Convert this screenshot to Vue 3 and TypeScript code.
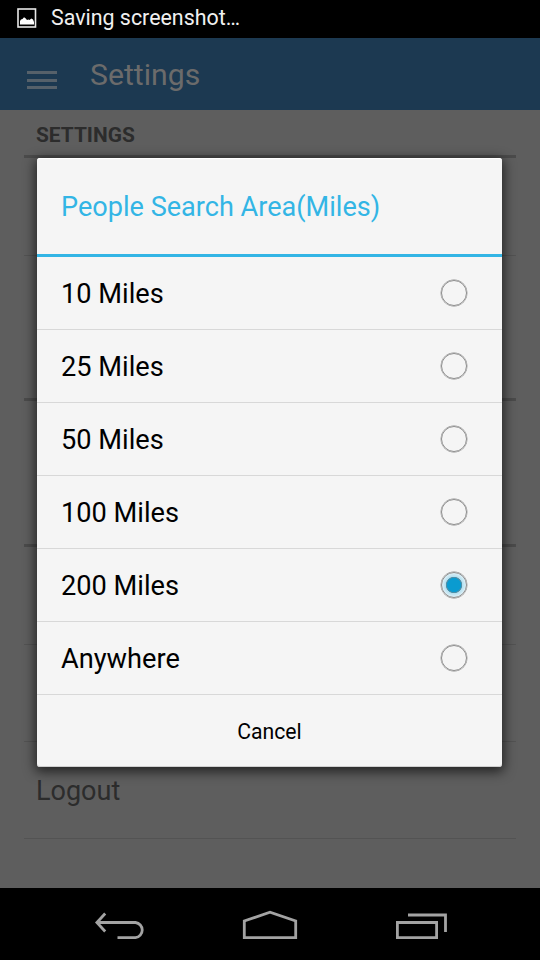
<script setup lang="ts">
import { ref } from 'vue'

const options: string[] = ['10 Miles', '25 Miles', '50 Miles', '100 Miles', '200 Miles', 'Anywhere']
const selected = ref('200 Miles')
</script>

<template>
  <div class="screen">
    <div class="status">
      <svg class="photo" width="20" height="20" viewBox="0 0 20 20">
        <rect x="1" y="1" width="17.5" height="18" fill="none" stroke="#e8e8e8" stroke-width="1.6" />
        <path d="M3 16.500V13l1-1.500 1.500-.5L7 9.300l1.500 1L10 12l1.500-.6 1 .6 1.800-1.400 1.700 1L17 14v2.500z" fill="#fff" />
      </svg>
      <span>Saving screenshot…</span>
    </div>

    <header class="bar">
      <div class="menu"><i></i><i></i><i></i></div>
      <h1>Settings</h1>
    </header>

    <main class="page">
      <h2 class="section first">SETTINGS</h2>
      <div class="item tall"></div>
      <div class="item last"></div>
      <div class="section"></div>
      <div class="item last tall"></div>
      <div class="section"></div>
      <div class="item"></div>
      <div class="item"></div>
      <div class="item"><span>Logout</span></div>
    </main>

    <nav class="nav">
      <svg width="540" height="72" viewBox="0 0 540 72" fill="none" stroke="#a3a3a3" stroke-width="2.8">
        <path d="M97 34.500h38.500a7.600 7.600 0 0 1 0 15.100H117.500M105.200 25.500l-8.300 9 8.300 9" />
        <path d="M244.300 49.600V33L270 24.200 295.700 33v16.600z" />
        <path d="M397.400 34.500h39.200v15.100h-39.200zM408 27h37.500v17" />
      </svg>
    </nav>

    <div class="overlay">
      <section class="dialog">
        <h3>People Search Area(Miles)</h3>
        <label v-for="option in options" :key="option" class="option" @click="selected = option">
          <span>{{ option }}</span>
          <i class="radio" :class="{ on: option === selected }"></i>
        </label>
        <button>Cancel</button>
      </section>
    </div>
  </div>
</template>

<style>
body {
  margin: 0;
  background: #000;
}
</style>

<style scoped>
.screen {
  position: relative;
  width: 540px;
  height: 960px;
  overflow: hidden;
  display: flex;
  flex-direction: column;
  background: #5e5e5e;
  font-family: Roboto, "Liberation Sans", sans-serif;
}
h1, h2, h3 {
  margin: 0;
  font-weight: 400;
}
.status {
  height: 38px;
  box-sizing: border-box;
  padding: 0 0 2px 17px;
  display: flex;
  align-items: center;
  gap: 14px;
  background: #000;
  color: #f0f0f0;
  font-size: 21.400px;
}
.status span {
  padding-bottom: 1px;
}
.bar {
  height: 72px;
  display: flex;
  align-items: center;
  background: #1c3951;
  color: #6b6b6b;
}
.menu {
  width: 30px;
  margin: 12px 33px 0 27px;
  display: flex;
  flex-direction: column;
  gap: 4.5px;
}
.menu i {
  height: 3px;
  background: #56616a;
}
h1 {
  font-size: 30.200px;
}
.page {
  height: 778px;
  box-sizing: border-box;
  padding: 0 24px;
}
.section {
  height: 48px;
  box-sizing: border-box;
  border-bottom: 3px solid #4b4b4b;
}
.first {
  padding: 0 12px;
  line-height: 51px;
  font-size: 20.900px;
  font-weight: 700;
  color: #2c2c2c;
}
.item {
  height: 97px;
  box-sizing: border-box;
  padding: 1px 12px 0;
  display: flex;
  align-items: center;
  border-bottom: 1px solid #535353;
  color: #2c2c2c;
  font-size: 27px;
}
.tall,
.section + .item {
  height: 98px;
}
.last {
  border: 0;
}
.nav {
  height: 72px;
  background: #000;
}
.nav svg {
  display: block;
}
.overlay {
  position: absolute;
  inset: 38px 0 72px;
  display: flex;
  justify-content: center;
  align-items: flex-start;
  padding: 120px 38px 0 37px;
}
.dialog {
  width: 465px;
  height: 609px;
  border-radius: 3px;
  background: #f5f5f5;
  box-shadow: 0 3px 12px 2px rgba(0, 0, 0, .62), inset 0 -1px #cfcfcf, inset 0 1px #fff;
  overflow: hidden;
}
h3 {
  height: 99px;
  box-sizing: border-box;
  padding: 0 24px;
  border-bottom: 3px solid #33b5e5;
  line-height: 99px;
  color: #33b5e5;
  font-size: 27.100px;
  white-space: nowrap;
}
.option {
  height: 73px;
  box-sizing: border-box;
  padding: 0 35px 0 24px;
  display: flex;
  align-items: center;
  justify-content: space-between;
  border-bottom: 1px solid #d8d8d8;
  font-size: 27.200px;
  color: #000;
}
.option span {
  padding-top: 2px;
}
.radio {
  width: 26px;
  height: 26px;
  box-sizing: border-box;
  border: 1px solid #8c8c8c;
  box-shadow: 0 0 0 .4px #8c8c8c;
  border-radius: 50%;
}
.on {
  background: radial-gradient(circle, #0a9bd0 0 6.800px, #4f8fa8 7.300px 7.800px, #b5e0f0 8.500px, #e0f0f6 12px);
}
button {
  display: block;
  width: 100%;
  height: 72px;
  padding: 1px 0 0;
  border: 0;
  background: transparent;
  color: #000;
  font: 21.200px Roboto, "Liberation Sans", sans-serif;
}
</style>
